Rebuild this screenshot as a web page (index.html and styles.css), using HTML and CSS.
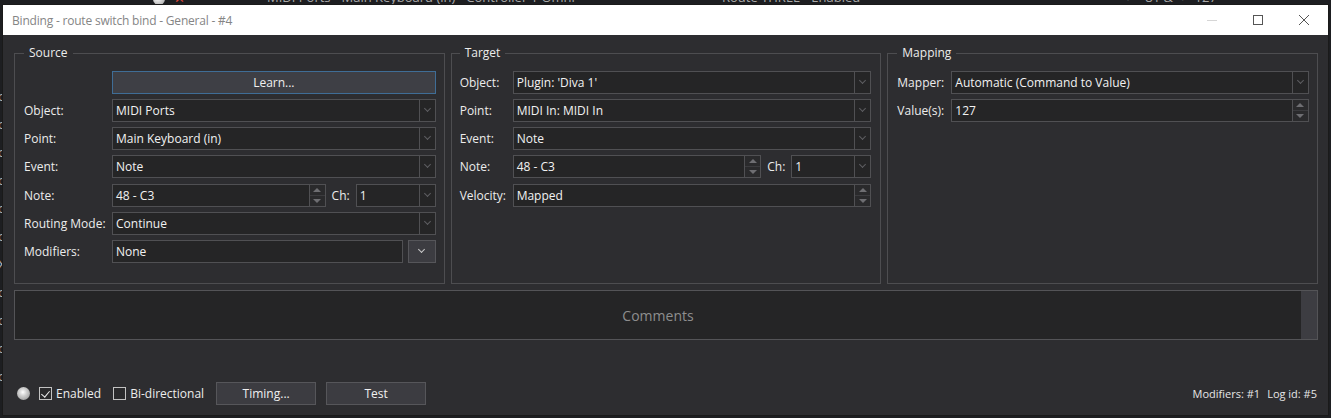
FILE: index.html
```html
<!DOCTYPE html>
<html lang="en">
<head>
    <meta charset="UTF-8">
    <title>Binding - route switch bind - General - #4</title>
    <link rel="stylesheet" href="styles.css">
</head>
<body>
    <div class="desktop">
        <!-- bits of the main window peeking out behind the dialog -->
        <div class="behind-top">
            <span class="behind-icon dot" style="left:153px"></span>
            <span class="behind-icon cross" style="left:174px">✕</span>
            <span class="behind-text" style="left:267px">MIDI Ports - Main Keyboard (in) - Controller 1 Omni</span>
            <span class="behind-text" style="left:722px">Route THREE - Enabled</span>
            <span class="behind-text" style="left:1127px">&gt;= 81 &amp; &lt;= 127</span>
        </div>
        <div class="behind-left">
            <span>o</span><span>o</span><span>o</span><span>o</span><span>o</span><span>o</span>
            <span>X</span><span>o</span><span>o</span><span>o</span><span>o</span>
        </div>

        <div class="window">
            <div class="titlebar">
                <span class="title">Binding - route switch bind - General - #4</span>
                <div class="caption">
                    <span class="cap-btn">
                        <svg width="10" height="10" viewBox="0 0 10 10"><path d="M0 5.5h10" stroke="#d6d6d6" fill="none"/></svg>
                    </span>
                    <span class="cap-btn">
                        <svg width="10" height="10" viewBox="0 0 10 10"><rect x="0.5" y="0.5" width="9" height="9" stroke="#555" fill="none"/></svg>
                    </span>
                    <span class="cap-btn">
                        <svg width="10" height="10" viewBox="0 0 10 10"><path d="M0 0L10 10M10 0L0 10" stroke="#555" fill="none"/></svg>
                    </span>
                </div>
            </div>

            <div class="client">
                <div class="groups">
                    <fieldset class="group source">
                        <legend>Source</legend>
                        <div class="form">
                            <span></span>
                            <button class="btn learn">Learn...</button>

                            <label>Object:</label>
                            <div class="combo"><span class="value">MIDI Ports</span><span class="arrow"></span></div>

                            <label>Point:</label>
                            <div class="combo"><span class="value">Main Keyboard (in)</span><span class="arrow"></span></div>

                            <label>Event:</label>
                            <div class="combo"><span class="value">Note</span><span class="arrow"></span></div>

                            <label>Note:</label>
                            <div class="inline">
                                <div class="spin"><span class="value">48 - C3</span><span class="arrows"><i class="up"></i><i class="down"></i></span></div>
                                <label class="ch">Ch:</label>
                                <div class="combo ch-combo"><span class="value">1</span><span class="arrow"></span></div>
                            </div>

                            <label>Routing Mode:</label>
                            <div class="combo"><span class="value">Continue</span><span class="arrow"></span></div>

                            <label>Modifiers:</label>
                            <div class="inline">
                                <div class="textbox"><span class="value">None</span></div>
                                <button class="btn drop-btn"><span class="chev"></span></button>
                            </div>
                        </div>
                    </fieldset>

                    <fieldset class="group target">
                        <legend>Target</legend>
                        <div class="form">
                            <label>Object:</label>
                            <div class="combo"><span class="value">Plugin: 'Diva 1'</span><span class="arrow"></span></div>

                            <label>Point:</label>
                            <div class="combo"><span class="value">MIDI In: MIDI In</span><span class="arrow"></span></div>

                            <label>Event:</label>
                            <div class="combo"><span class="value">Note</span><span class="arrow"></span></div>

                            <label>Note:</label>
                            <div class="inline">
                                <div class="spin"><span class="value">48 - C3</span><span class="arrows"><i class="up"></i><i class="down"></i></span></div>
                                <label class="ch">Ch:</label>
                                <div class="combo ch-combo"><span class="value">1</span><span class="arrow"></span></div>
                            </div>

                            <label>Velocity:</label>
                            <div class="spin"><span class="value">Mapped</span><span class="arrows"><i class="up"></i><i class="down"></i></span></div>
                        </div>
                    </fieldset>

                    <fieldset class="group mapping">
                        <legend>Mapping</legend>
                        <div class="form">
                            <label>Mapper:</label>
                            <div class="combo"><span class="value">Automatic (Command to Value)</span><span class="arrow"></span></div>

                            <label>Value(s):</label>
                            <div class="spin"><span class="value">127</span><span class="arrows"><i class="up"></i><i class="down"></i></span></div>
                        </div>
                    </fieldset>
                </div>

                <div class="comments">
                    <div class="comments-text">Comments</div>
                    <div class="comments-scroll"></div>
                </div>

                <div class="footer">
                    <span class="led"></span>
                    <label class="check checked"><span class="box"></span>Enabled</label>
                    <label class="check"><span class="box"></span>Bi-directional</label>
                    <button class="btn footer-btn">Timing...</button>
                    <button class="btn footer-btn">Test</button>
                    <div class="status">
                        <span>Modifiers: #1</span>
                        <span>Log id: #5</span>
                    </div>
                </div>
            </div>
        </div>
    </div>
</body>
</html>
```

FILE: styles.css
```css
* {
    box-sizing: border-box;
}

body {
    margin: 0;
    background: #1d1e21;
    font-family: 'Open Sans', 'Noto Sans', sans-serif;
    font-size: 12px;
    color: #ececec;
    overflow: hidden;
}

.desktop {
    position: relative;
    width: 1331px;
    height: 418px;
    overflow: hidden;
}

/* ---- main app behind the dialog ---- */
.behind-top {
    position: absolute;
    top: 0;
    left: 0;
    right: 0;
    height: 6px;
    overflow: hidden;
}

.behind-text {
    position: absolute;
    top: -11px;
    font-size: 13px;
    line-height: 16px;
    color: #a9a9a9;
    white-space: nowrap;
}

.behind-icon {
    position: absolute;
}

.behind-icon.dot {
    top: -7px;
    width: 12px;
    height: 12px;
    border-radius: 50%;
    background: radial-gradient(circle at 40% 40%, #fff, #9a9a9a);
}

.behind-icon.cross {
    top: -11px;
    font-size: 13px;
    color: #d8453a;
}

.behind-left {
    position: absolute;
    top: 82px;
    left: -2px;
    display: flex;
    flex-direction: column;
    font-size: 13px;
    line-height: 28px;
    color: #b5b5b5;
}

/* ---- dialog window ---- */
.window {
    position: absolute;
    left: 3px;
    top: 5px;
    width: 1325px;
    height: 410px;
    background: #2d2d30;
    display: flex;
    flex-direction: column;
    box-shadow: 0 0 0 1px #1a1a1a;
}

.titlebar {
    height: 30px;
    flex: none;
    background: #fff;
    display: flex;
    align-items: center;
    padding-left: 9px;
}

.title {
    color: #858585;
    font-size: 12px;
    letter-spacing: -0.2px;
}

.caption {
    margin-left: auto;
    margin-right: 1px;
    display: flex;
}

.cap-btn {
    width: 46px;
    height: 30px;
    display: flex;
    align-items: center;
    justify-content: center;
}

.client {
    flex: 1;
    display: flex;
    flex-direction: column;
    padding: 10px 10px 10px 11px;
}

.groups {
    display: grid;
    grid-template-columns: 1fr 1fr 1fr;
    gap: 6px;
}

.group {
    margin: 0;
    min-width: 0;
    border: 1px solid #4d4d50;
    padding: 10px 8px 20px 9px;
}

.group legend {
    padding: 0 5px;
    line-height: 16px;
    font-size: 12px;
    color: #ececec;
}

.target {
    padding-left: 8px;
    padding-right: 9px;
}

.form {
    display: grid;
    grid-template-columns: 88px 1fr;
    grid-template-rows: 23px 23px 23px 23px 24px 23px 23px;
    row-gap: 5px;
    align-items: center;
}

.target .form {
    grid-template-columns: 53px 1fr;
}

.mapping .form {
    grid-template-columns: 54px 1fr;
}

.form label {
    white-space: nowrap;
}

/* ---- inputs ---- */
.combo,
.spin,
.textbox {
    height: 23px;
    border: 1px solid #505053;
    background: #252526;
    display: flex;
    align-items: stretch;
    min-width: 0;
}

.value {
    flex: 1;
    padding-left: 3px;
    line-height: 21px;
    white-space: nowrap;
    overflow: hidden;
    color: #f2f2f2;
}

.arrow {
    width: 16px;
    border-left: 1px solid #505053;
    display: flex;
    align-items: center;
    justify-content: center;
}

.arrow::before,
.chev::before {
    content: '';
    width: 4px;
    height: 4px;
    border-right: 1px solid #5e5e62;
    border-bottom: 1px solid #5e5e62;
    transform: translateY(-2px) rotate(45deg);
}

.arrows {
    width: 16px;
    border-left: 1px solid #505053;
    display: flex;
    flex-direction: column;
}

.arrows i {
    flex: 1;
    display: flex;
    align-items: center;
    justify-content: center;
    background: #2a2a2c;
}

.arrows i + i {
    border-top: 1px solid #3b3b3e;
}

.arrows .up::before,
.arrows .down::before {
    content: '';
    border-left: 4px solid transparent;
    border-right: 4px solid transparent;
}

.arrows .up::before {
    border-bottom: 4px solid #6e6e72;
}

.arrows .down::before {
    border-top: 4px solid #6e6e72;
}

.inline {
    display: flex;
    align-items: center;
    min-width: 0;
}

.inline .spin,
.inline .textbox {
    flex: 1;
}

.ch {
    margin: 0 6px;
}

.ch-combo {
    width: 80px;
    flex: none;
}

/* ---- buttons ---- */
.btn {
    font: inherit;
    color: #f0f0f0;
    background: #3c3c41;
    border: 1px solid #56565a;
    padding: 0;
    height: 23px;
}

.learn {
    height: 23px;
    background: #3e3f45;
    border-color: #3f6d96;
}

.drop-btn {
    width: 28px;
    margin-left: 5px;
    display: flex;
    align-items: center;
    justify-content: center;
}

.chev::before {
    display: block;
    border-color: #c8c8c8;
}

/* ---- comments ---- */
.comments {
    margin-top: 6px;
    height: 50px;
    display: flex;
    border: 1px solid #545457;
    background: #252526;
}

.comments-text {
    flex: 1;
    display: flex;
    align-items: center;
    justify-content: center;
    font-size: 14px;
    color: #8e8e8e;
}

.comments-scroll {
    width: 16px;
    background: #3d3d42;
}

/* ---- footer ---- */
.footer {
    margin-top: auto;
    height: 23px;
    display: flex;
    align-items: center;
    padding-left: 3px;
}

.led {
    width: 13px;
    height: 13px;
    border-radius: 50%;
    background: radial-gradient(circle at 45% 40%, #ffffff 0%, #d0d0d0 35%, #8a8a8a 100%);
    margin-right: 9px;
}

.check {
    display: flex;
    align-items: center;
    margin-right: 12px;
}

.box {
    width: 13px;
    height: 13px;
    border: 1px solid #c2c2c2;
    background: #2a2a2c;
    margin-right: 4px;
    position: relative;
}

.checked .box::after {
    content: '';
    position: absolute;
    left: 3px;
    top: 1px;
    width: 4px;
    height: 7px;
    border-right: 1px solid #f0f0f0;
    border-bottom: 1px solid #f0f0f0;
    transform: rotate(40deg);
}

.footer-btn {
    width: 100px;
    margin-right: 10px;
}

.status {
    margin-left: auto;
    display: flex;
    gap: 7px;
    font-size: 11px;
    color: #e6e6e6;
    padding-right: 1px;
}
```
